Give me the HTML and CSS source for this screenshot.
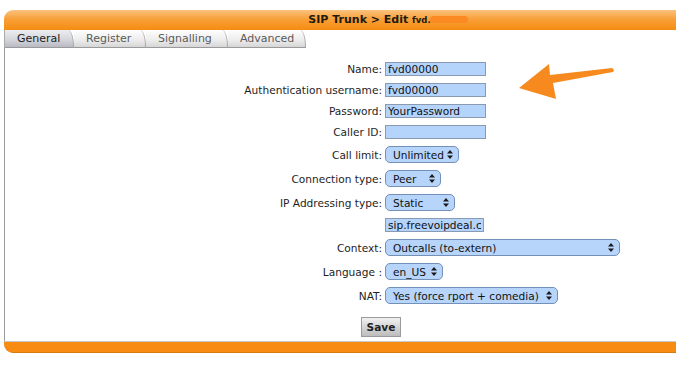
FILE: index.html
```html
<!DOCTYPE html>
<html lang="en">
<head>
  <meta charset="UTF-8">
  <title>SIP Trunk - Edit</title>
  <link rel="stylesheet" href="styles.css">
</head>
<body>

<div class="window">
  <div class="titlebar">SIP Trunk &gt; Edit <small>fvd.</small><span class="redact"></span></div>

  <!-- tabs -->
  <ul class="tabs">
    <li class="active">General</li>
    <li>Register</li>
    <li>Signalling</li>
    <li>Advanced</li>
  </ul>

  <div class="panel">
    <form class="form">
      <label>Name:</label>
      <div><input class="text" type="text" value="fvd00000"></div>

      <label>Authentication username:</label>
      <div><input class="text" type="text" value="fvd00000"></div>

      <label>Password:</label>
      <div><input class="text" type="text" value="YourPassword"></div>

      <label>Caller ID:</label>
      <div><input class="text" type="text" value=""></div>

      <label>Call limit:</label>
      <div class="select w-limit">
        <span>Unlimited</span>
        <svg width="6" height="9" viewBox="0 0 6 9"><path d="M3 0L6 3.6H0Z M3 9L0 5.4H6Z"/></svg>
      </div>

      <label>Connection type:</label>
      <div class="select w-conn">
        <span>Peer</span>
        <svg width="6" height="9" viewBox="0 0 6 9"><path d="M3 0L6 3.6H0Z M3 9L0 5.4H6Z"/></svg>
      </div>

      <label>IP Addressing type:</label>
      <div class="select w-ip">
        <span>Static</span>
        <svg width="6" height="9" viewBox="0 0 6 9"><path d="M3 0L6 3.6H0Z M3 9L0 5.4H6Z"/></svg>
      </div>

      <label></label>
      <div><input class="text host" type="text" value="sip.freevoipdeal.com"></div>

      <label>Context:</label>
      <div class="select w-context">
        <span>Outcalls (to-extern)</span>
        <svg width="6" height="9" viewBox="0 0 6 9"><path d="M3 0L6 3.6H0Z M3 9L0 5.4H6Z"/></svg>
      </div>

      <label>Language :</label>
      <div class="select w-lang">
        <span>en_US</span>
        <svg width="6" height="9" viewBox="0 0 6 9"><path d="M3 0L6 3.6H0Z M3 9L0 5.4H6Z"/></svg>
      </div>

      <label>NAT:</label>
      <div class="select w-nat">
        <span>Yes (force rport + comedia)</span>
        <svg width="6" height="9" viewBox="0 0 6 9"><path d="M3 0L6 3.6H0Z M3 9L0 5.4H6Z"/></svg>
      </div>

      <div class="actions">
        <button type="button" class="btn">Save</button>
      </div>
    </form>
  </div>

  <div class="footer"></div>
</div>

<!-- annotation arrow -->
<svg class="arrow" width="110" height="45" viewBox="0 0 110 45">
  <path d="M9 28 L39 4 L40 15 L102 8 Q105 10 103 12 L43 23 L46 39 Z"/>
</svg>

</body>
</html>
```

FILE: styles.css
```css
* {
  margin: 0;
  padding: 0;
  list-style: none;
  box-sizing: border-box;
}
body {
  background: #fff;
  font-family: "DejaVu Sans", Verdana, sans-serif;
  font-size: 10.6px;
  color: #1e1e1e;
}
/* 右侧被截断, 不画右边框 */
.window {
  margin: 10px 0 0 4px;
}

/* 标题栏 */
.titlebar {
  height: 20px;
  line-height: 20px;
  padding-left: 96px;
  text-align: center;
  font-size: 11px;
  font-weight: bold;
  color: #231a10;
  border-radius: 9px 0 0 0;
  background: linear-gradient(#fbc27f, #f8a039 45%, #f58c12);
}
.titlebar small {
  font-size: 8.5px;
}
.redact {
  display: inline-block;
  width: 38px;
  height: 7px;
  margin-left: -1px;
  vertical-align: 0;
  border-radius: 4px;
  background: #fb8a23;
}

/* 选项卡 */
.tabs {
  display: flex;
  height: 18px;
  border-left: 1px solid #aaa;
}
.tabs li {
  height: 18px;
  line-height: 17px;
  padding: 0 13px 0 12px;
  font-size: 11px;
  color: #5a5a5a;
  border-right: 1px solid #a8a8a8;
  border-bottom: 1px solid #9a9a9a;
  border-top-right-radius: 6px 16px;
  background: linear-gradient(#fefefe, #ececec 60%, #d6d6d6);
}
.tabs li.active {
  width: 69px;
  color: #1b1b1b;
  background: linear-gradient(#ecedf1, #d3d4da 60%, #b8b9c2);
}
.tabs li:nth-child(2) {
  width: 72px;
}
.tabs li:nth-child(3) {
  width: 82px;
}
.tabs li:nth-child(4) {
  width: 78px;
}

/* 内容区 */
.panel {
  border-left: 1px solid #9c9c9c;
  padding: 14px 0 4px;
}
.form {
  display: grid;
  grid-template-columns: 377px auto;
  column-gap: 3px;
  row-gap: 7px;
  align-items: center;
}
.form label {
  text-align: right;
  white-space: nowrap;
}
.text {
  display: block;
  width: 101px;
  height: 14px;
  padding: 0 2px;
  font: inherit;
  color: #111;
  border: 1px solid #8a9ab2;
  background: #b5d4fc;
  outline: none;
}
.text.host {
  width: 99px;
}
/* 下拉框 (Mac 风格) */
.select {
  display: flex;
  align-items: center;
  justify-content: space-between;
  gap: 3px;
  height: 17px;
  padding: 0 5px 0 7px;
  color: #111;
  white-space: nowrap;
  border: 1px solid #7390b8;
  border-radius: 5px;
  background: #b7d5fb;
}
.select svg {
  flex: none;
  fill: #1a1a1a;
}
.w-limit { width: 74px; }
.w-conn { width: 56px; }
.w-ip { width: 70px; }
.w-context { width: 235px; }
.w-lang { width: 58px; }
.w-nat { width: 173px; }

/* Save 按钮在 label 与输入框的分界处居中 */
.actions {
  grid-column: 1 / 3;
  margin-top: 6px;
  padding-left: 356px;
}
.btn {
  width: 40px;
  height: 20px;
  font: inherit;
  font-weight: bold;
  color: #222;
  border: 1px solid #9a9a9a;
  background: linear-gradient(#f1f1f1, #d2d2d2 55%, #bdbdbd);
}

/* 底栏 */
.footer {
  height: 12px;
  border-top: 1px solid #c9c9c9;
  border-bottom: 1px solid #d97a10;
  border-radius: 0 0 0 9px;
  background: #f88c12;
}

/* 箭头标注 */
.arrow {
  position: absolute;
  left: 510px;
  top: 60px;
  fill: #f68a1e;
}
```
